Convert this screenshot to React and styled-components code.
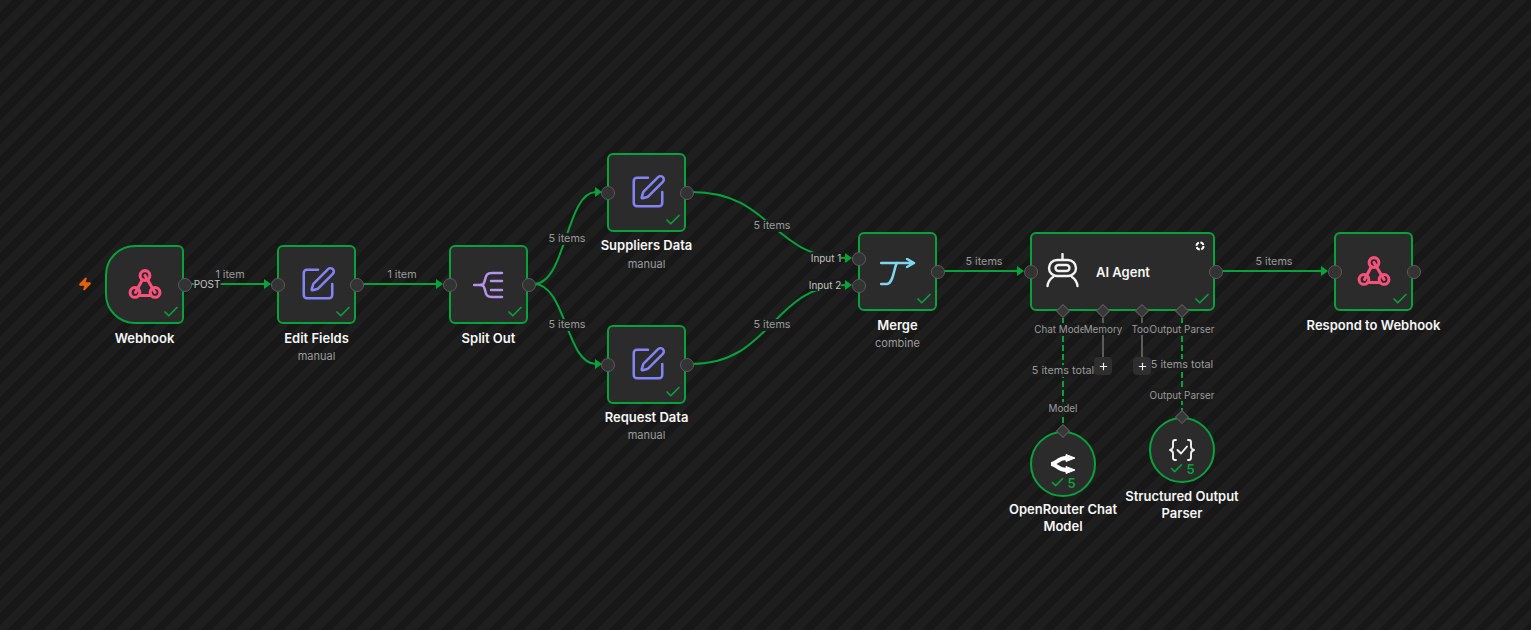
import React from 'react';
import styled, { createGlobalStyle } from 'styled-components';
import { SquarePen, Zap, Check, Plus } from 'lucide-react';

const GREEN = '#08a23b';

const GlobalStyle = createGlobalStyle`
  html, body {
    margin: 0;
    padding: 0;
    background: #1b1b1b;
    font-family: 'Inter', 'Liberation Sans', sans-serif;
  }
`;

const Canvas = styled.div`
  position: relative;
  width: 1531px;
  height: 630px;
  overflow: hidden;
  background-color: #1b1b1b;
  background-image: repeating-linear-gradient(
    135deg,
    #1e1e1e 0 9px,
    #171717 9px 17px
  );
`;

const Wires = styled.svg`
  position: absolute;
  inset: 0;
`;

const NodeWrap = styled.div`
  position: absolute;
  left: ${({ $x }) => $x}px;
  top: ${({ $y }) => $y}px;
  width: ${({ $w }) => $w}px;
  display: flex;
  flex-direction: column;
  align-items: center;
`;

const NodeBox = styled.div`
  box-sizing: border-box;
  position: relative;
  width: ${({ $w }) => $w}px;
  height: ${({ $h }) => $h}px;
  display: flex;
  align-items: center;
  justify-content: ${({ $wide }) => ($wide ? 'flex-start' : 'center')};
  padding-left: ${({ $wide }) => ($wide ? '14px' : '0')};
  gap: 17px;
  background: #2b2b2b;
  border: 2px solid ${GREEN};
  border-radius: ${({ $shape }) =>
    $shape === 'trigger' ? '30px 6px 6px 30px' : $shape === 'circle' ? '50%' : '6px'};
`;

const Caption = styled.div`
  width: 150px;
  margin-top: ${({ $mt }) => $mt || 6}px;
  text-align: center;
  flex-shrink: 0;
`;

const Title = styled.div`
  font-size: 13px;
  line-height: 17px;
  font-weight: 600;
  color: #f6f6f6;
`;

const Sub = styled.div`
  font-size: 11px;
  line-height: 14px;
  margin-top: ${({ $mt }) => $mt || 2}px;
  color: #9c9c9c;
`;

const AgentName = styled.span`
  font-size: 13px;
  font-weight: 600;
  color: #f6f6f6;
`;

const Done = styled.span`
  position: absolute;
  right: 2px;
  bottom: 1px;
  display: flex;
  color: ${GREEN};
`;

const Count = styled.span`
  position: absolute;
  left: 0;
  right: 0;
  bottom: 5px;
  display: flex;
  align-items: center;
  justify-content: center;
  gap: 2px;
  font-size: 13px;
  line-height: 14px;
  font-weight: 600;
  color: ${GREEN};
`;

const Ring = styled.svg`
  position: absolute;
  top: 7px;
  right: 8px;
`;

const Handle = styled.div`
  box-sizing: border-box;
  position: absolute;
  left: ${({ $x }) => $x - 6.5}px;
  top: ${({ $y }) => $y - 6.5}px;
  width: 14px;
  height: 14px;
  border-radius: 50%;
  background: #333;
  border: 1.5px solid #5a5a5a;
`;

const Diamond = styled.div`
  box-sizing: border-box;
  position: absolute;
  left: ${({ $x }) => $x - 5}px;
  top: ${({ $y }) => $y - 5}px;
  width: 10px;
  height: 10px;
  transform: rotate(45deg);
  background: #383838;
  border: 1px solid #5c5c5c;
`;

const EdgeLabel = styled.span`
  position: absolute;
  left: ${({ $x }) => $x}px;
  top: ${({ $y }) => $y}px;
  transform: translate(-50%, -50%);
  font-size: ${({ $port }) => ($port ? '9.9px' : '10.8px')};
  line-height: 12px;
  white-space: nowrap;
  color: ${({ $light }) => ($light ? '#c4c4c4' : '#9a9a9a')};
  background: ${({ $clear }) => ($clear ? 'transparent' : 'rgba(27, 27, 27, 0.92)')};
`;

const AddButton = styled.div`
  position: absolute;
  left: ${({ $x }) => $x - 9}px;
  top: 357px;
  width: 18px;
  height: 18px;
  display: flex;
  align-items: center;
  justify-content: center;
  border-radius: 4px;
  background: #2e2e2e;
  color: #f0f0f0;
`;

const Trigger = styled.div`
  position: absolute;
  left: 78px;
  top: 277px;
  display: flex;
  color: #e8610c;
`;

const EditIcon = styled(SquarePen).attrs({ size: 38, color: '#8383f7', strokeWidth: 1.6 })`
  margin: -2px 0 0 2px;
`;

const WebhookIcon = () => (
  <svg width="36" height="34" viewBox="0 0 34 32" fill="none" stroke="#f8527c" strokeWidth="2.9" strokeLinecap="round">
    <circle cx="17" cy="7" r="4.6" />
    <circle cx="7.5" cy="23" r="4.6" />
    <circle cx="26.5" cy="23" r="4.6" />
    <path d="M14.5 11 L8 23" />
    <path d="M17 7 L26.5 23" />
    <path d="M11 26 H23" />
  </svg>
);

const SplitIcon = () => (
  <svg width="31" height="28" viewBox="0 0 31 28" fill="none" stroke="#b592ec" strokeWidth="2.5" strokeLinecap="round">
    <path d="M1 14 H7 C11 14 11 12 12 9 C13 4 14 2 19 2 H29" />
    <path d="M7 14 C11 14 11 16 12 19 C13 24 14 26 19 26 H29" />
    <path d="M18 10 H29 M18 19 H29" />
  </svg>
);

const MergeIcon = () => (
  <svg width="36" height="28" viewBox="0 0 36 28" fill="none" stroke="#7fd6ee" strokeWidth="2.5" strokeLinecap="round" strokeLinejoin="round">
    <path d="M1 5 H34 M27 1 L34 5 L27 9" />
    <path d="M17 5 C14 8 14 25 7 26 H1" />
  </svg>
);

const RobotIcon = () => (
  <svg width="33" height="37" viewBox="0 0 33 37" fill="none" stroke="#f2f2f2" strokeWidth="2.4" strokeLinecap="round" strokeLinejoin="round">
    <path d="M16.5 1 V6" />
    <rect x="3" y="7" width="27" height="16" rx="8" />
    <rect x="9.5" y="12" width="14" height="6" rx="3" />
    <path d="M1.5 33 C2 29 4 26 7 24 M31.5 33 C31 29 29 26 26 24" />
  </svg>
);

const RouterIcon = () => (
  <svg width="26" height="20" viewBox="0 0 26 20" fill="#fff" stroke="#fff" strokeLinejoin="round">
    <path d="M1 10 C6 10 8 4 16 4" fill="none" strokeWidth="4" />
    <path d="M1 10 C6 10 8 16 16 16" fill="none" strokeWidth="4" />
    <path d="M16 0.5 L25 4 L16 7.5 Z" strokeWidth="1" />
    <path d="M16 12.5 L25 16 L16 19.5 Z" strokeWidth="1" />
  </svg>
);

const BracesIcon = () => (
  <svg width="26" height="24" viewBox="0 0 26 24" fill="none" stroke="#f2f2f2" strokeWidth="1.9" strokeLinecap="round" strokeLinejoin="round">
    <path d="M7 2 H6 C4.5 2 4 3 4 4.5 V8.5 C4 10 3 11.5 1 12 C3 12.5 4 14 4 15.5 V19.5 C4 21 4.5 22 6 22 H7" />
    <path d="M19 2 H20 C21.5 2 22 3 22 4.5 V8.5 C22 10 23 11.5 25 12 C23 12.5 22 14 22 15.5 V19.5 C22 21 21.5 22 20 22 H19" />
    <path d="M8.5 12 L12 15.5 L18 8.5" />
  </svg>
);

const nodes = [
  { id: 'webhook', x: 105, y: 245, shape: 'trigger', title: 'Webhook', icon: <WebhookIcon /> },
  { id: 'edit', x: 277, y: 245, title: 'Edit Fields', sub: 'manual', icon: <EditIcon /> },
  { id: 'split', x: 449, y: 245, title: 'Split Out', icon: <SplitIcon /> },
  { id: 'suppliers', x: 607, y: 153, mt: 5, subMt: 3, title: 'Suppliers Data', sub: 'manual', icon: <EditIcon /> },
  { id: 'request', x: 607, y: 325, mt: 5, title: 'Request Data', sub: 'manual', icon: <EditIcon /> },
  { id: 'merge', x: 858, y: 232, title: 'Merge', sub: 'combine', icon: <MergeIcon /> },
  { id: 'respond', x: 1334, y: 232, title: 'Respond to Webhook', icon: <WebhookIcon /> },
];

const handles = [
  [184, 284], [277, 284], [356, 284], [449, 284], [528, 284],
  [607, 192], [686, 192], [607, 364], [686, 364],
  [858, 258], [858, 285], [937, 271], [1030, 271], [1215, 271],
  [1334, 271], [1413, 271],
];

const diamonds = [[1063, 311], [1103, 311], [1142, 311], [1182, 311], [1063, 431], [1182, 417]];

const wires = [
  'M190 284 H265',
  'M362 284 H437',
  'M534 284 C566 284 566 192 596 192',
  'M534 284 C566 284 566 364 596 364',
  'M692 192 C772 192 772 258 846 258',
  'M692 364 C772 364 772 285 846 285',
  'M943 271 H1018',
  'M1221 271 H1322',
];

const arrows = [
  [271, 284], [443, 284], [602, 192], [602, 364],
  [852, 258], [852, 285], [1024, 271], [1328, 271],
];

const labels = [
  { x: 230, y: 275, text: '1 item', clear: true },
  { x: 402, y: 275, text: '1 item', clear: true },
  { x: 567, y: 239, text: '5 items' },
  { x: 567, y: 325, text: '5 items' },
  { x: 772, y: 226, text: '5 items' },
  { x: 772, y: 325, text: '5 items' },
  { x: 984, y: 262, text: '5 items', clear: true },
  { x: 1274, y: 262, text: '5 items', clear: true },
  { x: 207, y: 284, text: 'POST', light: true, port: true },
  { x: 826, y: 258, text: 'Input 1', light: true, port: true },
  { x: 825, y: 285, text: 'Input 2', light: true, port: true },
  { x: 1061, y: 329, text: 'Chat Model', port: true },
  { x: 1103, y: 329, text: 'Memory', port: true },
  { x: 1144, y: 329, text: 'Tools', port: true },
  { x: 1182, y: 329, text: 'Output Parser', port: true },
  { x: 1063, y: 371, text: '5 items total' },
  { x: 1182, y: 365, text: '5 items total' },
  { x: 1063, y: 408, text: 'Model', port: true },
  { x: 1182, y: 395, text: 'Output Parser', port: true },
];

const App = () => (
  <Canvas>
    <GlobalStyle />
    <Wires width="1531" height="630" viewBox="0 0 1531 630" fill="none">
      {wires.map(d => (
        <path key={d} d={d} stroke={GREEN} strokeWidth="2" />
      ))}
      {arrows.map(([x, y]) => (
        <path key={`${x}-${y}`} d={`M${x - 7} ${y - 5} L${x} ${y} L${x - 7} ${y + 5} Z`} fill={GREEN} />
      ))}
      <path d="M1063 318 V425 M1182 318 V411" stroke={GREEN} strokeWidth="2" strokeDasharray="6 3" />
      <path d="M1103 318 V357 M1142 318 V357" stroke="#5c5c5c" strokeWidth="2" />
    </Wires>

    <Trigger>
      <Zap size={14} fill="currentColor" />
    </Trigger>

    {nodes.map(n => (
      <NodeWrap key={n.id} $x={n.x} $y={n.y} $w={79}>
        <NodeBox $w={79} $h={79} $shape={n.shape}>
          {n.icon}
          <Done>
            <Check size={18} strokeWidth={2.2} />
          </Done>
        </NodeBox>
        <Caption $mt={n.mt}>
          <Title>{n.title}</Title>
          {n.sub && <Sub $mt={n.subMt}>{n.sub}</Sub>}
        </Caption>
      </NodeWrap>
    ))}

    <NodeWrap $x={1030} $y={232} $w={185}>
      <NodeBox $w={185} $h={79} $wide>
        <RobotIcon />
        <AgentName>AI Agent</AgentName>
        <Ring width="10" height="10" viewBox="0 0 10 10" fill="none">
          <circle cx="5" cy="5" r="3.5" stroke="#fff" strokeWidth="2" strokeDasharray="4 1.5" />
        </Ring>
        <Done>
          <Check size={18} strokeWidth={2.2} />
        </Done>
      </NodeBox>
    </NodeWrap>

    <NodeWrap $x={1030} $y={431} $w={66}>
      <NodeBox $w={66} $h={66} $shape="circle">
        <RouterIcon />
        <Count>
          <Check size={15} strokeWidth={2.6} />5
        </Count>
      </NodeBox>
      <Caption $mt={4}>
        <Title>OpenRouter Chat Model</Title>
      </Caption>
    </NodeWrap>

    <NodeWrap $x={1149} $y={417} $w={66}>
      <NodeBox $w={66} $h={66} $shape="circle">
        <BracesIcon />
        <Count>
          <Check size={15} strokeWidth={2.6} />5
        </Count>
      </NodeBox>
      <Caption $mt={5}>
        <Title>Structured Output Parser</Title>
      </Caption>
    </NodeWrap>

    {handles.map(([x, y]) => (
      <Handle key={`${x}-${y}`} $x={x} $y={y} />
    ))}
    {diamonds.map(([x, y]) => (
      <Diamond key={`${x}-${y}`} $x={x} $y={y} />
    ))}
    {labels.map(l => (
      <EdgeLabel key={`${l.x}-${l.y}`} $x={l.x} $y={l.y} $light={l.light} $clear={l.clear} $port={l.port}>
        {l.text}
      </EdgeLabel>
    ))}

    <AddButton $x={1103}>
      <Plus size={11} strokeWidth={2.4} />
    </AddButton>
    <AddButton $x={1142}>
      <Plus size={11} strokeWidth={2.4} />
    </AddButton>
  </Canvas>
);

export default App;
